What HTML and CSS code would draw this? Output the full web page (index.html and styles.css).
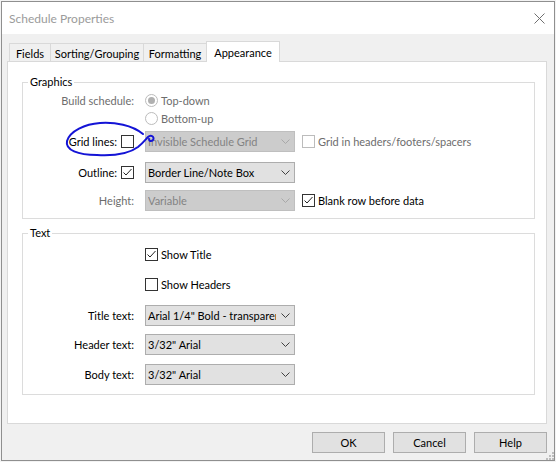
FILE: index.html
```html
<!DOCTYPE html>
<html>
<head>
<meta charset="utf-8">
<title>Schedule Properties</title>
<link rel="stylesheet" href="styles.css">
</head>
<body>
<div class="window">
  <div class="titlebar">
    <span class="title">Schedule Properties</span>
    <svg class="close" width="11" height="11" viewBox="0 0 11 11"><path d="M0.5 0.5 L10.5 10.5 M10.5 0.5 L0.5 10.5" stroke="#707070" stroke-width="1" fill="none"/></svg>
  </div>
  <div class="client">
    <div class="tabs">
      <div class="tab t-fields">Fields</div>
      <div class="tab t-sorting">Sorting/Grouping</div>
      <div class="tab t-formatting">Formatting</div>
      <div class="tab t-appearance active">Appearance</div>
    </div>
    <div class="panel">
      <fieldset class="group graphics">
        <legend>Graphics</legend>
        <div class="row short mt1">
          <div class="lab dis">Build schedule:</div>
          <div class="opt ctl dis"><span class="rb on"></span>Top-down</div>
        </div>
        <div class="row short">
          <div class="lab"></div>
          <div class="opt ctl dis"><span class="rb"></span>Bottom-up</div>
        </div>
        <div class="row mt4">
          <div class="lab">Grid lines:<span class="cb"></span></div>
          <div class="combo ctl disabled"><span class="ctext">Invisible Schedule Grid</span><svg class="chev" width="9" height="5" viewBox="0 0 9 5"><polyline points="0.5,0.5 4.5,4.5 8.5,0.5" fill="none" stroke="#a8a8a8"/></svg></div>
          <div class="opt extra dis"><span class="cb dis"></span>Grid in headers/footers/spacers</div>
        </div>
        <div class="row mt10">
          <div class="lab">Outline:<span class="cb"><svg width="11" height="11" viewBox="0 0 11 11"><polyline points="1.5,5.5 4,8 9.5,2" fill="none" stroke="#222"/></svg></span></div>
          <div class="combo ctl"><span class="ctext">Border Line/Note Box</span><svg class="chev" width="9" height="5" viewBox="0 0 9 5"><polyline points="0.5,0.5 4.5,4.5 8.5,0.5" fill="none" stroke="#404040"/></svg></div>
        </div>
        <div class="row mt7">
          <div class="lab dis">Height:</div>
          <div class="combo ctl disabled"><span class="ctext">Variable</span><svg class="chev" width="9" height="5" viewBox="0 0 9 5"><polyline points="0.5,0.5 4.5,4.5 8.5,0.5" fill="none" stroke="#a8a8a8"/></svg></div>
          <div class="opt extra"><span class="cb"><svg width="11" height="11" viewBox="0 0 11 11"><polyline points="1.5,5.5 4,8 9.5,2" fill="none" stroke="#222"/></svg></span>Blank row before data</div>
        </div>
      </fieldset>
      <fieldset class="group textgrp">
        <legend>Text</legend>
        <div class="row mt3">
          <div class="lab"></div>
          <div class="opt ctl"><span class="cb"><svg width="11" height="11" viewBox="0 0 11 11"><polyline points="1.5,5.5 4,8 9.5,2" fill="none" stroke="#222"/></svg></span>Show Title</div>
        </div>
        <div class="row mt9">
          <div class="lab"></div>
          <div class="opt ctl"><span class="cb"></span>Show Headers</div>
        </div>
        <div class="row mt10">
          <div class="lab">Title text:</div>
          <div class="combo ctl"><span class="ctext">Arial 1/4" Bold - transparent</span><svg class="chev" width="9" height="5" viewBox="0 0 9 5"><polyline points="0.5,0.5 4.5,4.5 8.5,0.5" fill="none" stroke="#404040"/></svg></div>
        </div>
        <div class="row mt8">
          <div class="lab">Header text:</div>
          <div class="combo ctl"><span class="ctext">3/32" Arial</span><svg class="chev" width="9" height="5" viewBox="0 0 9 5"><polyline points="0.5,0.5 4.5,4.5 8.5,0.5" fill="none" stroke="#404040"/></svg></div>
        </div>
        <div class="row mt9">
          <div class="lab">Body text:</div>
          <div class="combo ctl"><span class="ctext">3/32" Arial</span><svg class="chev" width="9" height="5" viewBox="0 0 9 5"><polyline points="0.5,0.5 4.5,4.5 8.5,0.5" fill="none" stroke="#404040"/></svg></div>
        </div>
      </fieldset>
    </div>
    <div class="buttons">
      <div class="btn">OK</div>
      <div class="btn">Cancel</div>
      <div class="btn">Help</div>
    </div>
  </div>
  <svg class="grip" width="9" height="9" viewBox="0 0 9 9">
    <rect x="7" y="1" width="2" height="2" fill="#bdbdbd"/>
    <rect x="4" y="4" width="2" height="2" fill="#bdbdbd"/>
    <rect x="7" y="4" width="2" height="2" fill="#bdbdbd"/>
    <rect x="1" y="7" width="2" height="2" fill="#bdbdbd"/>
    <rect x="4" y="7" width="2" height="2" fill="#bdbdbd"/>
    <rect x="7" y="7" width="2" height="2" fill="#bdbdbd"/>
  </svg>
</div>
<svg class="annot" width="556" height="462" viewBox="0 0 556 462">
  <path d="M 143 134 C 132 125, 115 122, 100 123 C 85 124, 70 131, 67 141 C 65 150, 78 155, 97 155 C 115 156, 130 153, 138 147 C 143 143, 146 139, 148 137 C 151 134, 155 137, 153 140 C 151 142, 149 141, 149 139" fill="none" stroke="#1414d6" stroke-width="2" stroke-linecap="round" stroke-linejoin="round"/>
</svg>
</body>
</html>
```

FILE: styles.css
```css
* { box-sizing: border-box; }
html, body { margin: 0; }
body {
  width: 556px;
  height: 462px;
  overflow: hidden;
  position: relative;
  padding: 1px 0 0 1px;
  background: #f3f3f3;
  font-family: "Segoe UI", Lato, "Noto Sans", sans-serif;
  font-size: 11px;
  color: #000;
}
.window {
  width: 554px;
  height: 460px;
  border: 1px solid #8f8f8f;
  background: #f0f0f0;
  display: flex;
  flex-direction: column;
  position: relative;
}
.titlebar {
  height: 32px;
  flex: none;
  background: #fff;
  display: flex;
  align-items: center;
  justify-content: space-between;
  padding: 0 9px 0 7px;
}
.title { font-size: 12px; color: #9b9b9b; }
.close { display: block; }
.client {
  flex: 1;
  display: flex;
  flex-direction: column;
  padding: 7px 7px 0 5px;
}
.tabs {
  display: flex;
  align-items: flex-end;
  padding-left: 3px;
  position: relative;
  z-index: 1;
}
.tab {
  height: 18px;
  margin-left: -1px;
  border: 1px solid #d9d9d9;
  border-bottom: none;
  background: #f0f0f0;
  display: flex;
  align-items: center;
  justify-content: center;
  padding-top: 1px;
  white-space: nowrap;
}
.t-fields { width: 42px; }
.t-sorting { width: 94px; }
.t-formatting { width: 64px; }
.t-appearance { width: 74px; }
.tab.active {
  height: 21px;
  margin-bottom: -1px;
  background: #fff;
  padding-top: 0;
}
.panel {
  height: 363px;
  flex: none;
  background: #fff;
  border: 1px solid #d9d9d9;
}
.group {
  margin: 0 0 0 14px;
  width: 513px;
  min-width: 0;
  border: 1px solid #dcdcdc;
  padding: 0 0 7px 0;
}
.group legend {
  padding: 0 2px;
  margin-left: 5px;
  line-height: 16px;
}
.graphics { margin-top: 12px; }
.textgrp { margin-top: 6px; padding-bottom: 9px; }
.row {
  display: flex;
  align-items: center;
  height: 21px;
}
.row.short { height: 18px; }
.mt1 { margin-top: 1px; }
.mt3 { margin-top: 3px; }
.mt4 { margin-top: 4px; }
.mt7 { margin-top: 7px; }
.mt8 { margin-top: 8px; }
.mt9 { margin-top: 9px; }
.mt10 { margin-top: 10px; }
.lab {
  width: 111px;
  flex: none;
  display: flex;
  justify-content: flex-end;
  align-items: center;
  gap: 4px;
  white-space: nowrap;
}
.ctl { margin-left: 11px; }
.extra { margin-left: 7px; }
.dis { color: #6d6d6d; }
.opt {
  display: flex;
  align-items: center;
  gap: 3px;
  white-space: nowrap;
}
.cb {
  width: 13px;
  height: 13px;
  flex: none;
  border: 1px solid #333;
  background: #fff;
  display: flex;
  align-items: center;
  justify-content: center;
}
.cb.dis { border-color: #bcbcbc; }
.cb svg { display: block; }
.rb {
  width: 13px;
  height: 13px;
  flex: none;
  border: 1px solid #bcbcbc;
  border-radius: 50%;
  background: #fff;
  display: flex;
  align-items: center;
  justify-content: center;
}
.rb.on::after {
  content: "";
  width: 7px;
  height: 7px;
  border-radius: 50%;
  background: #b0b0b0;
}
.combo {
  width: 150px;
  height: 21px;
  flex: none;
  border: 1px solid #adadad;
  background: #e1e1e1;
  display: flex;
  align-items: center;
  padding: 0 4px 0 2px;
}
.combo.disabled {
  background: #cccccc;
  border-color: #bfbfbf;
  color: #838383;
}
.ctext {
  flex: 1;
  min-width: 0;
  overflow: hidden;
  white-space: nowrap;
  margin-right: 5px;
}
.chev { display: block; flex: none; }
.buttons {
  display: flex;
  justify-content: flex-end;
  gap: 8px;
  margin-top: 8px;
}
.btn {
  width: 73px;
  height: 21px;
  border: 1px solid #adadad;
  background: #e1e1e1;
  display: flex;
  align-items: center;
  justify-content: center;
}
.grip {
  position: absolute;
  right: 0;
  bottom: 0;
}
.annot {
  position: absolute;
  left: 0;
  top: 0;
  pointer-events: none;
}
```
